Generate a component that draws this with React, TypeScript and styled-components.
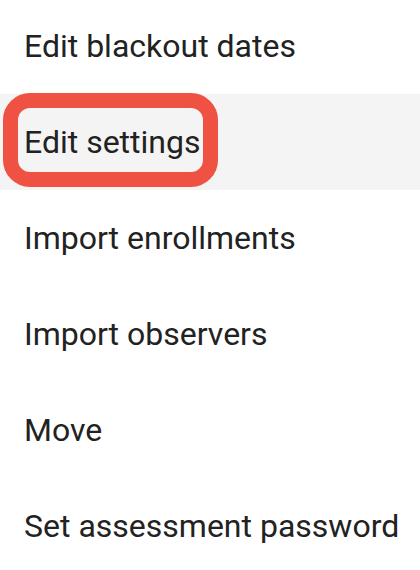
import React from "react";
import styled, { createGlobalStyle } from "styled-components";

const Global = createGlobalStyle`
  html, body { margin: 0; padding: 0; background: #ffffff; }
  body { font-family: Roboto, "Noto Sans", Arial, sans-serif; }
`;

const Menu = styled.ul`
  list-style: none;
  margin: -2px 0 0 0;
  padding: 0;
  width: 420px;
`;

const Item = styled.li<{ $active?: boolean }>`
  height: 96px;
  display: flex;
  align-items: center;
  padding-left: 24px;
  background: ${(p) => (p.$active ? "#f4f4f4" : "transparent")};
  color: #222222;
  font-size: 32px;
  font-weight: 400;
`;

const Label = styled.span`
  position: relative;
  line-height: 32px;
`;

const Highlight = styled.span`
  position: absolute;
  left: -21px;
  top: -33px;
  width: 215px;
  height: 94px;
  box-sizing: border-box;
  border: 15px solid #ef5142;
  border-radius: 27px;
  pointer-events: none;
`;

const items = [
  "Edit blackout dates",
  "Edit settings",
  "Import enrollments",
  "Import observers",
  "Move",
  "Set assessment password",
];

export default function App() {
  return (
    <>
      <Global />
      <Menu>
        {items.map((t) => {
          const active = t === "Edit settings";
          return (
            <Item key={t} $active={active}>
              <Label>
                {t}
                {active && <Highlight />}
              </Label>
            </Item>
          );
        })}
      </Menu>
    </>
  );
}
